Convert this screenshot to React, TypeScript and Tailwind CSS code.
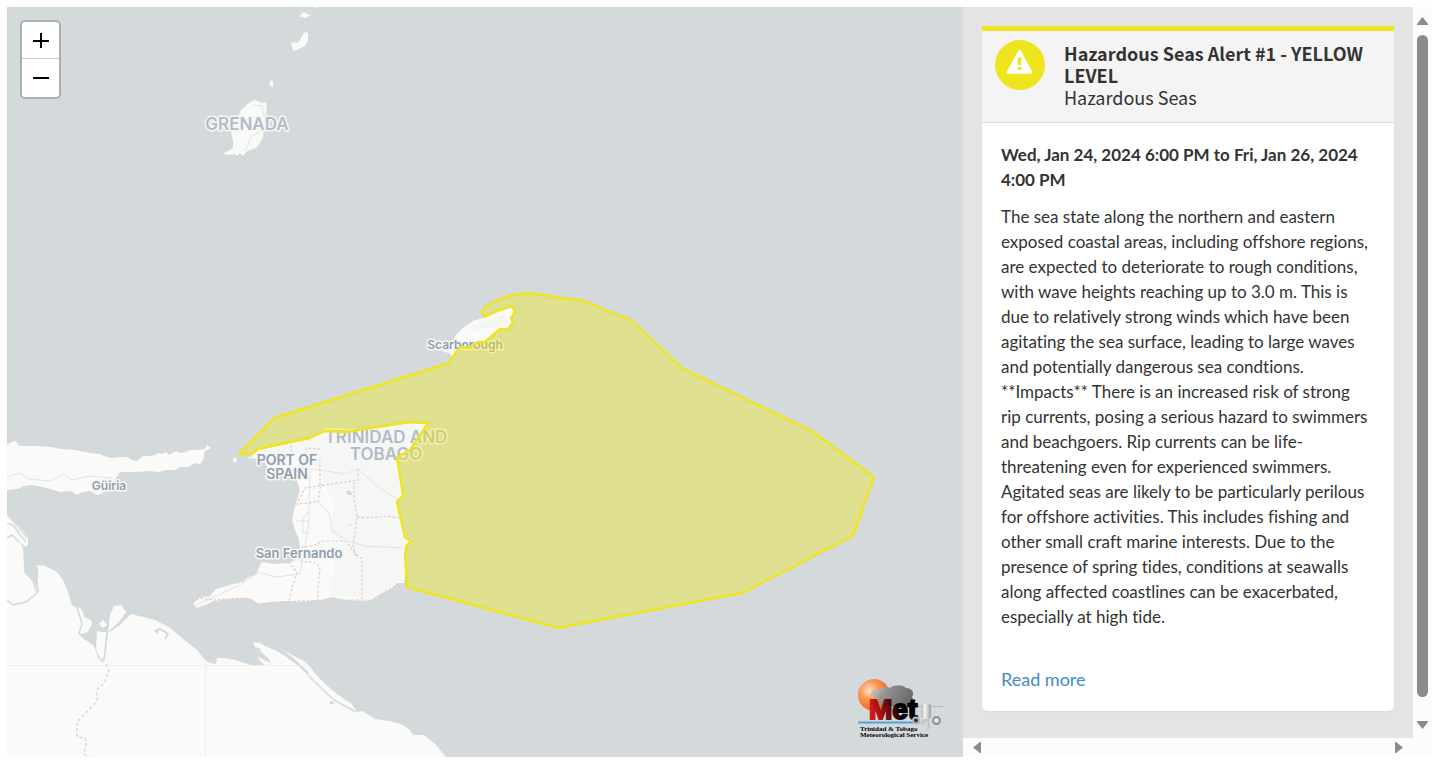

import * as React from 'react';
import { useState } from 'react';

const ALERT = {
  title: 'Hazardous Seas Alert #1 - YELLOW LEVEL',
  type: 'Hazardous Seas',
  period: 'Wed, Jan 24, 2024 6:00 PM to Fri, Jan 26, 2024 4:00 PM',
  description:
    'The sea state along the northern and eastern exposed coastal areas, including offshore regions, are expected to deteriorate to rough conditions, with wave heights reaching up to 3.0 m. This is due to relatively strong winds which have been agitating the sea surface, leading to large waves and potentially dangerous sea condtions. **Impacts** There is an increased risk of strong rip currents, posing a serious hazard to swimmers and beachgoers. Rip currents can be life-threatening even for experienced swimmers. Agitated seas are likely to be particularly perilous for offshore activities. This includes fishing and other small craft marine interests. Due to the presence of spring tides, conditions at seawalls along affected coastlines can be exacerbated, especially at high tide.',
};

const ALERT_AREA =
  'M239 454L274 418L449 363L456 352L461 347L470 348L478 342L485 342L500 329L508 330L513 322L511 318L515 312L512 306L500 310L484 317L482 312L486 306L500 299L512 295L528 293L584 301L631 320L682 368L812 431L874 477L853 536L742 593L558 628L407 587L405 554L407 545L411 541L405 537L397 502L403 495L397 457L410 450L428 423L410 422L345 432L325 431L310 438L258 449L252 454Z';

const LAND = [
  // Paria peninsula
  'M7 445L12 442L16 441L19 446L35 446L50 447L62 449L75 450L90 453L100 454L110 458L122 457L127 457L132 460L137 461L143 456L150 456L155 455L158 453L162 454L166 452L169 455L176 451L180 453L186 452L190 450L197 450L205 449L207 445L211 448L205 451L203 460L200 464L195 463L188 467L180 467L175 470L165 470L159 472L150 471L135 472L120 472L116 478L109 488L103 493L97 495L90 491L82 492L77 495L71 491L60 492L50 489L42 487L32 485L24 486L18 489L7 490Z',
  // Venezuela mainland
  'M7 514L20 527L28 537L28 544L26 547L21 543L24 552L24 565L26 575L33 580L38 590L38 568L36 565L45 566L57 572L63 580L68 592L72 605L77 608L80 607L83 612L84 617L91 620L92 624L88 632L80 635L86 640L94 646L98 658L103 663L106 650L108 633L120 625L131 614L143 617L155 620L170 628L182 638L197 650L205 660L210 663L216 664L217 658L225 658L235 660L254 666L267 666L261 662L257 656L262 659L271 663L268 658L260 651L261 649L255 647L253 642L260 643L265 646L275 650L285 656L296 664L306 673L309 677L308 672L300 664L292 657L281 649L292 655L304 661L310 667L320 679L332 690L345 700L351 703L357 712L362 711L375 719L390 721L403 725L410 730L413 735L424 735L435 744L441 751L446 757L7 757Z',
  'M97 631L102 632L107 632L107 642L104 657L101 660L96 650Z',
  'M108 632L110 615L114 606L121 605L126 612L119 622Z',
  'M99 624L103 620L107 625L103 628Z',
  // Trinidad
  'M246 457L250 459L254 452L258 450L275 446L290 443L310 438L325 432L345 433L370 428L405 423L427 424L412 449L397 458L400 475L403 494L397 503L400 520L405 537L411 541L405 550L405 575L404 583L398 583L390 590L380 594L372 600L362 601L345 600L333 597L320 600L300 602L288 601L270 602L258 604L252 599L245 598L228 599L214 601L205 605L197 608L193 603L199 598L210 596L216 589L230 585L243 582L248 577L256 575L259 567L262 562L275 564L290 563L298 558L300 548L299 540L295 530L292 520L294 510L297 500L300 490L297 481L292 475L270 470L262 460Z',
  'M233 459L236 457L237 461L234 463Z',
  // Tobago
  'M440 351L451 350L455 336L463 328L473 321L482 318L500 311L511 307L514 311L511 318L512 322L507 328L500 329L485 341L478 341L470 347L461 346L452 356L449 353Z',
  // Grenada and the Grenadines
  'M255 100L262 103L266 102L267 115L264 125L263 138L256 148L247 151L243 156L240 153L237 156L235 154L230 155L223 154L233 148L233 140L231 133L236 122L241 110L250 102Z',
  'M293 51L291 42L297 43L300 40L304 32L308 33L308 40L305 46L297 50Z',
  'M299 16L304 12L307 14L311 15L305 18Z',
  'M271 79L273 82L273 88L271 86L269 85Z',
  'M314 7L316 7L315 9Z',
];

const WATERWAYS = [
  'M7 514L20 529L27 538',
  'M7 523L14 526L20 535L26 542',
  'M7 538L12 535L20 543',
  'M24 550L25 572L33 581L37 593L26 602L13 605L7 600',
  'M36 565L38 592',
  'M77 607L82 624L79 633L86 640',
  'M109 612L107 632L104 661',
  'M356 712L334 700L318 685L309 676',
];

const ROADS = [
  'M7 477L20 473L28 479L50 481L64 474L72 480L90 476L112 478',
  'M310 471L309 505L309 522L305 546L300 574L275 577L258 572L240 585L218 595L196 605',
  'M300 468L320 470L345 474L358 469L378 487L397 499',
  'M313 498L329 513L333 532L350 542L365 546L403 548',
  'M296 521L309 521M309 510L303 519L303 533L309 533',
  'M245 151L252 136L263 130L266 112',
  'M253 105L262 106L264 117',
];

const BOUNDARIES = [
  'M291 445V462M320 449L306 448V468M320 460V486M358 469V480L305 488L297 504L318 502L321 484',
  'M354 482V498L357 517L353 545L356 558',
  'M357 517L370 518L386 516L400 518',
  'M301 547L313 546L322 541L345 541L357 555L362 559V600',
  'M288 562L297 572L293 584L289 601',
  'M300 561L316 563L320 567L317 601',
  'M193 603L199 598L214 600L245 598L258 604L300 601L345 600L372 600L398 584',
];

interface MapLabel {
  text: string;
  x: number;
  y: number;
  className: string;
}

const LABELS: MapLabel[] = [
  { text: 'GRENADA', x: 247, y: 130, className: 'fill-[#b1bcc6] text-[17px] font-semibold' },
  { text: 'TRINIDAD AND', x: 386, y: 443, className: 'fill-[#b1bcc6] text-[17px] font-semibold' },
  { text: 'TOBAGO', x: 386, y: 460, className: 'fill-[#b1bcc6] text-[17px] font-semibold' },
  { text: 'PORT OF', x: 287, y: 465, className: 'fill-[#909eae] text-[14px] font-semibold' },
  { text: 'SPAIN', x: 287, y: 479, className: 'fill-[#909eae] text-[14px] font-semibold' },
  { text: 'San Fernando', x: 299, y: 558, className: 'fill-[#909eae] text-[13px] font-semibold' },
  { text: 'Scarborough', x: 465, y: 349, className: 'fill-[#909eae] text-[12px] font-semibold' },
  { text: 'Güiria', x: 109, y: 490, className: 'fill-[#909eae] text-[12px] font-semibold' },
];

const AlertMap: React.FC<{ zoom: number }> = ({ zoom }) => (
  <svg
    className="block h-full w-full"
    viewBox="7 7 956 750"
    preserveAspectRatio="xMidYMid slice"
    role="img"
    aria-label="Alert area"
  >
    <g style={{ transform: `scale(${zoom})`, transformOrigin: '485px 382px' }}>
      {LAND.map((d) => (
        <path key={d} d={d} fill="#fafaf8" />
      ))}
      {/* Woodland tint */}
      <path
        d="M262 452L325 434L405 425L420 427L396 457L400 494L396 504L408 540L403 580L370 598L330 596L335 560L345 545L330 530L335 505L325 485L322 470L300 462Z"
        fill="#f5f7f5"
      />
      <path d="M470 327L484 321L503 315L507 322L490 328L476 330Z" fill="#f4f6f4" />
      <path d="M346 492L349 490L353 495L348 495ZM347 525L353 524L350 526Z" fill="#d4dadc" />
      <path d="M155 631L160 629L164 631L168 634L165 639M158 633L155 630" fill="none" stroke="#d4dadc" strokeWidth="2" />
      <path d="M329 702L332 701L335 704L330 704Z" fill="#d4dadc" />
      {WATERWAYS.map((d) => (
        <path key={d} d={d} fill="none" stroke="#d4dadc" strokeWidth="1.5" />
      ))}
      {ROADS.map((d) => (
        <path key={d} d={d} fill="none" stroke="#e2e4e4" strokeWidth="1" />
      ))}
      <path d="M7 665.5H306M205.5 661V757" fill="none" stroke="#efefee" />
      {BOUNDARIES.map((d) => (
        <path key={d} d={d} fill="none" stroke="#e8c6cb" strokeWidth="1.2" strokeDasharray="2.5 2" />
      ))}
      <path
        d="M106 664L109 670L105 682L97 690L97 701L77 722L77 737L85 738L86 743L84 754L89 757"
        fill="none"
        stroke="#e8c9cf"
        strokeWidth="1.3"
        strokeDasharray="3 2.5"
      />
      {LABELS.map((label) => (
        <text
          key={label.text}
          x={label.x}
          y={label.y}
          textAnchor="middle"
          stroke="#f6f7f6"
          strokeWidth="3"
          strokeLinejoin="round"
          paintOrder="stroke"
          className={label.className}
        >
          {label.text}
        </text>
      ))}
      <path
        d={ALERT_AREA}
        fill="#f0e61e"
        fillOpacity="0.4"
        stroke="#efe51f"
        strokeWidth="2.4"
        strokeLinejoin="round"
      />
    </g>
  </svg>
);

const MetLogo: React.FC = () => (
  <svg
    className="absolute right-5 bottom-[17px]"
    width="86"
    height="62"
    viewBox="857 678 86 62"
    role="img"
    aria-label="Trinidad & Tobago Meteorological Service"
  >
    <defs>
      <radialGradient id="sun" cx="0.35" cy="0.35" r="0.7">
        <stop offset="0" stopColor="#ffe3c4" />
        <stop offset="0.4" stopColor="#fd9a55" />
        <stop offset="1" stopColor="#ee5d1c" />
      </radialGradient>
      <linearGradient id="cloud" x1="0" x2="1" y1="0" y2="0.3">
        <stop offset="0" stopColor="#d0d0d0" />
        <stop offset="0.4" stopColor="#929292" />
        <stop offset="1" stopColor="#6d6d6d" />
      </linearGradient>
      <linearGradient id="met" x1="0" x2="1" y1="0.2" y2="0">
        <stop offset="0" stopColor="#d4161c" />
        <stop offset="0.42" stopColor="#4a0808" />
        <stop offset="0.55" stopColor="#000" />
      </linearGradient>
      <linearGradient id="tank" x1="0" x2="1" y1="0" y2="0">
        <stop offset="0" stopColor="#b5b8b9" />
        <stop offset="0.4" stopColor="#f4f4f4" />
        <stop offset="1" stopColor="#9b9e9f" />
      </linearGradient>
    </defs>
    <circle cx="874" cy="695" r="16" fill="url(#sun)" />
    <path
      d="M871 696C870 690 875 688 879 690C882 686 888 687 890 688C893 685 902 684 906 688C912 688 915 693 912 697C915 702 912 707 906 707L880 706L878 698Z"
      fill="url(#cloud)"
    />
    <path d="M905 706.5H943" stroke="#b3b7b8" />
    <path d="M858 722.5H914" stroke="#4fa3da" strokeWidth="2" />
    <text
      x="869"
      y="719"
      fill="url(#met)"
      stroke="url(#met)"
      strokeWidth="2"
      className="font-['Liberation_Sans',sans-serif] text-[28px] font-bold"
    >
      Met
    </text>
    <path d="M921 706C921 702 931 702 931 706V717C931 720 921 720 921 717Z" fill="url(#tank)" />
    <path d="M924 719L923 725M928 719L929 728M926 719V722" stroke="#bcbfc0" strokeWidth="1.5" />
    <path d="M929 727L926 730M917 725L924 720" stroke="#c5c8c9" strokeWidth="1.5" />
    <circle cx="916" cy="720.5" r="3" fill="#333" stroke="#b5b8b9" strokeWidth="2" />
    <circle cx="936.500" cy="720.5" r="3.5" fill="#d4dadc" stroke="#8f9293" strokeWidth="2" />
    <circle cx="936.500" cy="720.5" r="1.5" fill="#eef0f0" />
    <g className="fill-black font-['Liberation_Serif',serif] text-[7px] font-bold">
      <text x="860" y="731">
        Trinidad &amp; Tobago
      </text>
      <text x="860" y="737">
        Meteorological Service
      </text>
    </g>
  </svg>
);

const WarningIcon: React.FC = () => (
  <svg className="size-[50px] shrink-0" viewBox="0 0 50 50" aria-hidden="true">
    <circle cx="25" cy="25" r="25" fill="#efe51f" />
    <path
      d="M23.300 10.800C23.900 9.800 25.300 9.800 25.900 10.800L37.200 31.800C37.700 32.700 37.100 33.700 36 33.700H13C11.900 33.700 11.300 32.700 11.800 31.800Z"
      fill="#fff"
    />
    <path d="M22.500 17.500H26.500L26.100 25H22.900ZM22.700 26.800H26.300V30.100H22.700Z" fill="#efe51f" />
  </svg>
);

export default function App() {
  const [zoom, setZoom] = useState(1);

  return (
    <div className="flex h-screen bg-white pt-[7px] pr-[5px] pb-[6px] pl-[7px] font-[Lato,sans-serif] text-[#333]">
      {/* Map */}
      <main className="relative min-w-0 flex-1 overflow-hidden bg-[#d4dadc] font-[Inter,sans-serif]">
        <AlertMap zoom={zoom} />
        <div className="absolute top-[13px] left-[13px] flex flex-col overflow-hidden rounded-[5px] border-2 border-black/20 bg-clip-padding">
          <button
            type="button"
            aria-label="Zoom in"
            onClick={() => setZoom((z) => Math.min(z * 2, 8))}
            className="flex h-[37px] w-[37px] items-center justify-center border-b border-[#ccc] bg-white text-black"
          >
            <svg className="size-4" viewBox="0 0 16 16" aria-hidden="true">
              <path d="M0 9H16M8 1V16" stroke="currentColor" strokeWidth="2" />
            </svg>
          </button>
          <button
            type="button"
            aria-label="Zoom out"
            onClick={() => setZoom((z) => Math.max(z / 2, 1))}
            className="flex h-[38px] w-[37px] items-center justify-center bg-white text-black"
          >
            <svg className="size-4" viewBox="0 0 16 16" aria-hidden="true">
              <path d="M0 8H16" stroke="currentColor" strokeWidth="2" />
            </svg>
          </button>
        </div>
        <MetLogo />
      </main>

      {/* Alert panel */}
      <aside className="flex w-[469px] shrink-0 flex-col bg-[#fcfcfc]">
        <div className="flex min-h-0 flex-1">
          <div className="min-w-0 flex-1 overflow-hidden bg-[#e4e4e4] p-[19px]">
            <article className="rounded-b-[5px] border-t-[5px] border-[#efe51f] bg-white shadow-xs">
              <header className="flex gap-[19px] border-b border-[#ddd] bg-[#f4f4f4] px-[13px] pt-[9px] pb-[14px]">
                <WarningIcon />
                <div className="pt-[2px] font-['Noto_Sans_CJK_SC',sans-serif] text-[18px] leading-[22px]">
                  <h1 className="font-bold">{ALERT.title}</h1>
                  <p>{ALERT.type}</p>
                </div>
              </header>
              <div className="py-[19px] pr-6 pl-[19px] text-[17px] leading-[25px] [font-variant-ligatures:none]">
                <h2 className="mb-3 font-bold">{ALERT.period}</h2>
                <p className="mb-[38px]">{ALERT.description}</p>
                <a href="#details" className="block text-[18px] text-[#428bca]">
                  Read more
                </a>
              </div>
            </article>
          </div>

          {/* Vertical scrollbar */}
          <div className="flex w-[19px] shrink-0 flex-col items-center pt-[10px] pb-[9px]" aria-hidden="true">
            <svg className="h-2 w-[11px]" viewBox="0 0 11 8" fill="#8b8b8b">
              <path d="M5.500 0L11 7V8H0V7Z" />
            </svg>
            <div className="mt-[10px] mb-6 w-[11px] flex-1 rounded-full bg-[#8b8b8b]" />
            <svg className="h-2 w-[11px]" viewBox="0 0 11 8" fill="#8b8b8b">
              <path d="M5.500 8L11 1V0H0V1Z" />
            </svg>
          </div>
        </div>

        {/* Horizontal scrollbar */}
        <div className="flex h-[19px] shrink-0 items-center justify-between pr-[29px] pl-[10px]" aria-hidden="true">
          <svg className="h-[11px] w-2" viewBox="0 0 8 11" fill="#8b8b8b">
            <path d="M0 5.500L7 0H8V11H7Z" />
          </svg>
          <svg className="h-[11px] w-2" viewBox="0 0 8 11" fill="#8b8b8b">
            <path d="M8 5.500L1 0H0V11H1Z" />
          </svg>
        </div>
      </aside>
    </div>
  );
}
